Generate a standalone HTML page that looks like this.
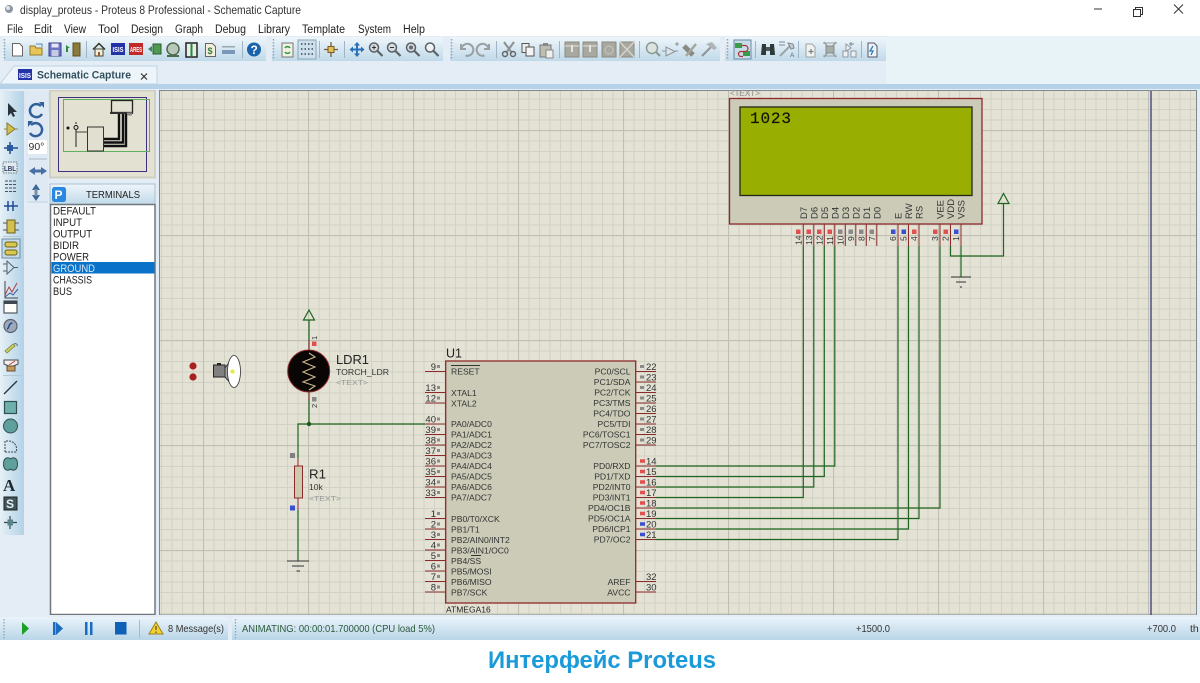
<!DOCTYPE html>
<html><head><meta charset="utf-8"><title>display_proteus</title>
<style>
html,body{margin:0;padding:0;background:#fff;width:1200px;height:683px;overflow:hidden}
svg{display:block;font-family:"Liberation Sans",sans-serif;filter:blur(.3px)}
.m{font-size:11.5px;fill:#222}
.pl{font-size:8.6px;fill:#333}
.pn{font-size:9.5px;fill:#333}
.v{font-size:8px;fill:#333}
.t{font-size:11px;fill:#222}
</style></head><body>
<svg width="1200" height="683" viewBox="0 0 1200 683" xmlns="http://www.w3.org/2000/svg">
<defs>
<linearGradient id="tb" x1="0" y1="0" x2="0" y2="1"><stop offset="0" stop-color="#eef5fa"/><stop offset="1" stop-color="#c0d9e9"/></linearGradient>
<linearGradient id="st" x1="0" y1="0" x2="0" y2="1"><stop offset="0" stop-color="#eaf3fa"/><stop offset="1" stop-color="#b9d5e7"/></linearGradient>
<linearGradient id="lt" x1="0" y1="0" x2="1" y2="0"><stop offset="0" stop-color="#e6f0f7"/><stop offset="1" stop-color="#b2d2e6"/></linearGradient>
<pattern id="minor" x="203" y="340" width="10.5" height="10.5" patternUnits="userSpaceOnUse"><rect width="10.5" height="10.5" fill="#e3e2d4"/><path d="M.5 0V10.5M0 .5H10.5" stroke="#d1d1c5" stroke-width="1" fill="none"/></pattern>
<pattern id="major" x="203" y="340" width="105" height="105" patternUnits="userSpaceOnUse"><path d="M.5 0V105M0 .5H105" stroke="#bfbfb3" stroke-width="1.200" fill="none"/></pattern>
</defs>

<!-- base -->
<rect width="1200" height="683" fill="#fff"/>
<rect y="36" width="1200" height="54" fill="#e4edf5"/>
<rect x="886" y="36" width="314" height="48" fill="#e7f3f6"/>
<rect y="84" width="1200" height="5" fill="#b5d2e8"/>
<rect y="89" width="1200" height="528" fill="#e4ecf6"/>
<rect x="1197" y="89" width="3" height="528" fill="#e2eef6"/>

<!-- title -->
<circle cx="9" cy="9" r="4" fill="#8d98a4"/><circle cx="8" cy="8" r="2" fill="#dfe5ea"/>
<text x="20" y="14" font-size="12" fill="#333" textLength="281" lengthAdjust="spacingAndGlyphs">display_proteus - Proteus 8 Professional - Schematic Capture</text>
<path d="M1094 9H1102" stroke="#333" stroke-width="1"/>
<path d="M1133.500 9.500h7v7h-7zM1135.500 9.500v-2h7v7h-2" fill="none" stroke="#333" stroke-width="1"/>
<path d="M1174 4.500L1183 13.500M1183 4.500L1174 13.500" stroke="#333" stroke-width="1"/>

<!-- menu -->
<text class="m" x="7" y="33" textLength="16" lengthAdjust="spacingAndGlyphs">File</text>
<text class="m" x="34" y="33" textLength="18" lengthAdjust="spacingAndGlyphs">Edit</text>
<text class="m" x="64" y="33" textLength="22" lengthAdjust="spacingAndGlyphs">View</text>
<text class="m" x="98" y="33" textLength="21" lengthAdjust="spacingAndGlyphs">Tool</text>
<text class="m" x="131" y="33" textLength="32" lengthAdjust="spacingAndGlyphs">Design</text>
<text class="m" x="175" y="33" textLength="28" lengthAdjust="spacingAndGlyphs">Graph</text>
<text class="m" x="215" y="33" textLength="31" lengthAdjust="spacingAndGlyphs">Debug</text>
<text class="m" x="258" y="33" textLength="32" lengthAdjust="spacingAndGlyphs">Library</text>
<text class="m" x="302" y="33" textLength="43" lengthAdjust="spacingAndGlyphs">Template</text>
<text class="m" x="358" y="33" textLength="33" lengthAdjust="spacingAndGlyphs">System</text>
<text class="m" x="403" y="33" textLength="22" lengthAdjust="spacingAndGlyphs">Help</text>

<!-- toolbars -->
<rect x="4" y="37" width="262" height="24" fill="url(#tb)"/>
<rect x="272" y="37" width="171" height="24" fill="url(#tb)"/>
<rect x="450" y="37" width="270" height="24" fill="url(#tb)"/>
<rect x="725" y="37" width="161" height="24" fill="url(#tb)"/>
<path d="M4.500 39V60M273.500 39V60M451.500 39V60M727.500 39V60" stroke="#8ea6b8" stroke-width="1.500" stroke-dasharray="1.500 1.500"/>
<path d="M86.500 41V58M242.500 41V58M319.500 41V58M344.500 41V58M496.500 41V58M559.500 41V58M639.500 41V58M755.500 41V58M798.500 41V58M861.500 41V58" stroke="#9fb4c4" stroke-width="1"/>

<!-- file icons -->
<path d="M12.500 43.500h7l3 3v9.500h-10z" fill="#fff" stroke="#666"/>
<path d="M30 55V46h5l1 2h6v7z" fill="#e8c558" stroke="#927a2c"/><path d="M36 44h6v3" fill="none" stroke="#5a88b0"/>
<rect x="49" y="43" width="12" height="13" fill="#6e74c4" stroke="#3c4290"/><rect x="51.500" y="43.500" width="7" height="4" fill="#e8e8f4"/><rect x="51.500" y="50" width="7" height="6" fill="#c8cae4"/>
<rect x="73" y="43" width="7" height="13" fill="#8a7a3c" stroke="#5c5020"/><path d="M66 45l4 3h-2v4h-2z" fill="#2c8c3c"/>
<!-- home -->
<path d="M93 49.500L99 43.500L105 49.500" fill="none" stroke="#332" stroke-width="1.500"/><rect x="95" y="49" width="8" height="7" fill="#f2eedf" stroke="#443"/><rect x="98" y="52" width="2" height="4" fill="#a05a20"/>
<!-- isis/ares -->
<rect x="111" y="43" width="14" height="12" fill="#2432a8"/><text x="112.500" y="52" font-size="7.500" font-weight="bold" fill="#fff" textLength="11" lengthAdjust="spacingAndGlyphs">ISIS</text>
<rect x="129" y="43" width="14" height="12" fill="#c22a2a"/><text x="130" y="52" font-size="7" font-weight="bold" fill="#fff" textLength="12" lengthAdjust="spacingAndGlyphs">ARES</text>
<path d="M148 49l4-3v6z" fill="#3a8a5a"/><rect x="153" y="44" width="8" height="10" fill="#4e9a50" stroke="#2c5c30"/>
<circle cx="173" cy="49" r="6" fill="#b8c8b8" stroke="#4f6a50" stroke-width="1.500"/><path d="M167 56h12" stroke="#4f6a50" stroke-width="2"/>
<rect x="186" y="43" width="11" height="14" fill="#e8efe0" stroke="#222" stroke-width="1.500"/><path d="M191.500 44v12" stroke="#1a8a4a" stroke-width="2"/>
<path d="M205.500 43.500h7l3 3v10h-10z" fill="#f2f0dc" stroke="#666"/><text x="207.500" y="54" font-size="9" font-weight="bold" fill="#3a7a3a">$</text>
<rect x="222" y="46" width="13" height="1.500" fill="#9aa"/><rect x="222" y="50" width="13" height="4" fill="#7a96b8"/>
<circle cx="254" cy="49.500" r="7" fill="#1b62ac"/><text x="250.500" y="54" font-size="12" font-weight="bold" fill="#fff">?</text>
<!-- design tools -->
<rect x="282" y="43" width="11" height="14" fill="#f2f2e4" stroke="#777"/><path d="M285 48a3 3 0 0 1 5 0M290 52a3 3 0 0 1-5 0" fill="none" stroke="#2c9a3c" stroke-width="1.500"/>
<rect x="298" y="40" width="18" height="19" fill="#cfe0ec" stroke="#8aa6b8"/><path d="M301 44h12M301 49h12M301 54h12" stroke="#2f4a5c" stroke-width="1.500" stroke-dasharray="1.500 2"/>
<path d="M331 42V57M324 49.500H338" stroke="#7a5a2c" stroke-width="1.300"/><rect x="328" y="46.500" width="6" height="6" fill="#e0c050" stroke="#7a5a2c"/>
<path d="M357 42l3 3.500h-2v3h3v-2l3.500 3-3.500 3v-2h-3v3h2l-3 3.500-3-3.500h2v-3h-3v2l-3.500-3 3.500-3v2h3v-3h-2z" fill="#2a72b8"/>
<g fill="#d4dce0" stroke="#5a6268" stroke-width="1.500"><circle cx="374" cy="47.500" r="4.500"/><circle cx="392" cy="47.500" r="4.500"/><circle cx="411" cy="47.500" r="4.500"/><circle cx="430" cy="47.500" r="4.500" fill="#eef2f4"/></g>
<path d="M377.500 51l5 5M395.500 51l5 5M414.500 51l5 5M433.500 51l5 5" stroke="#5a6268" stroke-width="2.200"/>
<path d="M372 47.500h4M374 45.500v4M390 47.500h4" stroke="#333" stroke-width="1"/><circle cx="411" cy="47.500" r="2" fill="#667"/>
<!-- undo redo -->
<path d="M461 44v5h5M461.500 48.500a6 6 0 1 1 4 7" fill="none" stroke="#99a0a4" stroke-width="2"/>
<path d="M489 44v5h-5M488.500 48.500a6 6 0 1 0-4 7" fill="none" stroke="#99a0a4" stroke-width="2"/>
<path d="M504 42l8 11M514 42l-8 11" stroke="#8a9094" stroke-width="2"/><circle cx="505" cy="54" r="2.500" fill="none" stroke="#666" stroke-width="1.500"/><circle cx="513" cy="54" r="2.500" fill="none" stroke="#666" stroke-width="1.500"/>
<rect x="522" y="43.500" width="7" height="9" fill="#eee" stroke="#555"/><rect x="526" y="47" width="8" height="9" fill="#f4f4f4" stroke="#555"/>
<rect x="540" y="45" width="11" height="12" fill="#bdbdb0" stroke="#777"/><rect x="543" y="43" width="5" height="3" fill="#888"/><rect x="546" y="50" width="7" height="8" fill="#eee" stroke="#888"/>
<g fill="#a8a8a0" stroke="#8a8a84"><rect x="565" y="42" width="14" height="15"/><rect x="583" y="42" width="14" height="15"/><rect x="602" y="42" width="14" height="15"/><rect x="620" y="42" width="14" height="15"/></g>
<path d="M565 46h14M583 46h14" stroke="#e4e4dc"/><path d="M572 45v7M590 45v7" stroke="#e4e4dc" stroke-width="2"/><path d="M620 42l14 15M634 42l-14 15" stroke="#d4d4cc" stroke-width="1.500"/><circle cx="609" cy="50" r="4" fill="none" stroke="#c8c8c0"/>
<!-- gray tools -->
<circle cx="652" cy="48" r="5.500" fill="#dce4e0" stroke="#8c9a94" stroke-width="1.500"/><path d="M656 52l4 4" stroke="#8c9a94" stroke-width="2.200"/>
<path d="M666 47v9l9-4.500z" fill="#dde4e8" stroke="#8a9498"/><path d="M662 51h4M675 51h3M675 44h4M677 42v4" stroke="#8a9498"/>
<path d="M684 46l9 9" stroke="#8a8a80" stroke-width="5"/><path d="M686 56l10-12" stroke="#a6a69c" stroke-width="2.500"/>
<path d="M702 56l11-11" stroke="#8e9498" stroke-width="2"/><path d="M706 44l6-2 5 6-3 2z" fill="#aeb4b8"/>
<!-- right group -->
<rect x="734" y="40" width="17" height="19" fill="#c8dcea" stroke="#6a8ca4"/><rect x="735" y="43" width="7" height="5" fill="#3a9a4a"/><rect x="743" y="51" width="7" height="5" fill="#3a9a4a"/><path d="M742 45.500h3a3 3 0 0 1 0 6h-4a2.500 2.500 0 0 0 0 5h2" fill="none" stroke="#a83232" stroke-width="1.200"/>
<path d="M762 44h4v11h-5zM770 44h4l1 11h-5z" fill="#2e3a3a"/><path d="M766 47h4v4h-4z" fill="#4a5a5a"/>
<path d="M779 42h6M779 45h6" stroke="#7a8a94"/><path d="M780 56l10-10" stroke="#9aa4aa" stroke-width="2"/><path d="M788 43l5 1 1 4-3 1z" fill="#c4ccd0" stroke="#7a8a94"/><text x="790" y="57" font-size="6.500" fill="#667">A</text>
<path d="M806 44h6l3 3v10h-9z" fill="#f0f2ee" stroke="#9aa4a8"/><path d="M811 49v5M808.500 51.500h5" stroke="#7a8488" stroke-width="1.300"/>
<path d="M824 42l12 15M836 42l-12 15" stroke="#9aa0a0" stroke-width="1.500"/><rect x="826" y="46" width="8" height="7" fill="#a6aca8" stroke="#858c88"/><path d="M823 43h14M823 56h14" stroke="#9aa0a0"/>
<path d="M846 44l5 4-5 3zM843 51h5v6h-5zM851 51h5v6h-5z" fill="#eef1f2" stroke="#9099a0"/><path d="M851 42v4M849 44h5" stroke="#7b858c"/>
<path d="M868 43h6l3 3v11h-9z" fill="#eef4f6" stroke="#556"/><path d="M873 46l-3 5h3l-2 4" fill="none" stroke="#2a7ac0" stroke-width="1.300"/>

<!-- tab -->
<path d="M0 84L14 66H157V84Z" fill="#edf5fa" stroke="#bdd3e3"/>
<rect x="18" y="69" width="14" height="11" fill="#2432a8"/><text x="19" y="78" font-size="7.500" font-weight="bold" fill="#fff" textLength="12" lengthAdjust="spacingAndGlyphs">ISIS</text>
<text x="37" y="78.500" font-size="11" font-weight="bold" fill="#33505f" textLength="94" lengthAdjust="spacingAndGlyphs">Schematic Capture</text>
<path d="M141 73.500l6 6M147 73.500l-6 6" stroke="#333" stroke-width="1.200"/>

<!-- left toolbar -->
<rect x="0" y="91" width="24" height="444" fill="url(#lt)"/>
<rect x="24" y="91" width="25" height="23" fill="#dbe8f2"/>
<rect x="26" y="91" width="22" height="112" fill="#dfe9f3"/>
<!-- rotate icons -->
<path d="M41 106a6.500 6.500 0 1 0 1 8" fill="none" stroke="#30609a" stroke-width="2.500"/><path d="M39 102h5v6z" fill="#30609a"/>
<path d="M31 125a6.500 6.500 0 1 1-1 8" fill="none" stroke="#30609a" stroke-width="2.500"/><path d="M33 121h-5v6z" fill="#30609a"/>
<rect x="28" y="140" width="19" height="14" fill="#fff"/><text x="28.500" y="150" font-size="10.500" fill="#333">90°</text>
<path d="M29 159H47" stroke="#a9b9c5"/>
<path d="M29 171l6-4v8zM47 171l-6-4v8z" fill="#4a6fa4"/><rect x="34" y="169.500" width="8" height="3" fill="#4a6fa4"/>
<path d="M36 184l-4 6h8zM36 201l-4-6h8z" fill="#35689e"/><rect x="34.500" y="189" width="3" height="7" fill="#7a8fa6"/>
<path d="M28 202H48" stroke="#c4d2dc"/>

<!-- left icons -->
<path d="M8 103v13l3-3 2 4 2-1-2-4h4z" fill="#28323c"/>
<path d="M4 129h3M14 129h4" stroke="#9a8a3a"/><path d="M7 123v12l8-6z" fill="#d0c050" stroke="#8a7a30"/>
<path d="M10 142v12M4 148h14" stroke="#2a4a8c" stroke-width="1.500"/><rect x="7" y="145" width="6" height="6" fill="#2a5aa0"/>
<rect x="3" y="162" width="14" height="11" fill="#dfeaf0" stroke="#6a7a88" stroke-dasharray="1.500 1"/><text x="4" y="171" font-size="7.500" fill="#2a3a5a" font-weight="bold" textLength="12" lengthAdjust="spacingAndGlyphs">LBL</text>
<path d="M5 181h11M5 184.500h11M5 188h11M5 191.500h11" stroke="#4a5060" stroke-dasharray="3 1"/>
<path d="M4 206H18M8 201V211M13 201V211" stroke="#224a94" stroke-width="1.500"/>
<rect x="7" y="220" width="8" height="13" fill="#d4c050" stroke="#6a6020"/><path d="M3 223h4M3 230h4M15 223h4M15 230h4" stroke="#555"/>
<path d="M3 236.500H22" stroke="#b9c9d4"/>
<rect x="2" y="239" width="18" height="19" fill="#c6dae8" stroke="#6e8ea6"/><rect x="5" y="242" width="12" height="5" rx="2" fill="#d8c850" stroke="#6a6020"/><rect x="5" y="250" width="12" height="5" rx="2" fill="#d8c850" stroke="#6a6020"/>
<path d="M7 261v13l7-6.500zM3 264h4M3 271h4M14 267.500h4" fill="none" stroke="#55606a"/>
<path d="M5 281v17h13" fill="none" stroke="#445"/><path d="M5 295l4-8 3 5 5-9" fill="none" stroke="#b04040"/><path d="M5 297l5-4 3 2 5-6" fill="none" stroke="#3a5a9a"/>
<rect x="4" y="301" width="13" height="12" fill="#fdfdfa" stroke="#505a62" stroke-width="1.200"/><rect x="4" y="301" width="13" height="3" fill="#3e4650"/>
<circle cx="10.500" cy="326" r="6.500" fill="#a0a8b8" stroke="#5a6272" stroke-width="1.200"/><path d="M7 329c1 0 1.500-1.500 2-3s1.500-3 3.500-3" fill="none" stroke="#1a4a9a" stroke-width="1.500"/>
<path d="M5 351l8-7 2 2-8 7z" fill="#c8d060" stroke="#7a7a30" stroke-width=".7"/><path d="M14 344c2-1 3 0 3.500 2" fill="none" stroke="#666"/>
<path d="M4 360h14v4l-7 3-7-3z" fill="#f0f0ee" stroke="#4a4a50"/><rect x="7" y="366" width="8" height="5" fill="#c09a60" stroke="#6a5030"/><path d="M9 365l6-4" stroke="#c04040"/>
<path d="M3 375.500H22" stroke="#b9c9d4"/>
<path d="M4 394L17 381" stroke="#2c343a" stroke-width="1.300"/>
<rect x="4.500" y="401.500" width="12" height="12" fill="#6fb0ac" stroke="#2f4f52" stroke-width="1.200"/>
<circle cx="10.500" cy="426" r="7" fill="#5f9f9c" stroke="#2f4f52"/>
<path d="M5 452v-11h4a8 8 0 0 1 7 11z" fill="none" stroke="#3a4450" stroke-dasharray="2 1"/>
<path d="M10.500 459c-2-2-7-2-7 5s5 7 7 5c2 2 7 2 7-5s-5-7-7-5z" fill="#5f9f9c" stroke="#2f4f52"/>
<text x="3" y="491" font-size="17" font-weight="bold" font-family="Liberation Serif,serif" fill="#1e2a30">A</text>
<rect x="4" y="497" width="13" height="13" fill="#40565c" stroke="#222"/><text x="6" y="508" font-size="12" font-weight="bold" fill="#e8f0f0">S</text>
<path d="M10 516v13M4 522.500h13" stroke="#2a4a4e" stroke-width="1.200"/><rect x="7.500" y="519.500" width="5.500" height="6" fill="#5b8286"/>

<!-- preview -->
<rect x="49" y="90" width="107" height="88.500" fill="#cfcfc2"/>
<rect x="51" y="91.500" width="103" height="85" fill="#e2e1d2"/>
<rect x="58.500" y="97.500" width="88" height="74" fill="none" stroke="#3a3280" stroke-width="1"/>
<rect x="63.500" y="99.500" width="86" height="52" fill="none" stroke="#60b060" stroke-width="1"/>
<rect x="87.500" y="127" width="16" height="24" fill="#e0dfd0" stroke="#333"/>
<rect x="111.500" y="100.500" width="21" height="12" fill="#e2e1d2" stroke="#222" stroke-width="1.300"/><rect x="110" y="112" width="23" height="2" fill="#333"/>
<path d="M104 139H119V114M104 142.500H123V114M104 146H126V114" fill="none" stroke="#111" stroke-width="2.400"/><path d="M127 114h5" stroke="#888" stroke-width="3"/>
<circle cx="76" cy="127.500" r="2" fill="none" stroke="#111"/><path d="M76 122v2M76 130V147" stroke="#222"/><circle cx="68" cy="128" r="1.500" fill="#111"/><path d="M76 132H88" stroke="#444"/>

<!-- terminals -->
<rect x="50" y="184" width="105" height="21" fill="url(#tb)" stroke="#a9bfce"/>
<rect x="52" y="187" width="14" height="15" rx="2.500" fill="#2a88e0"/><text x="54.500" y="199" font-size="12" font-weight="bold" fill="#fff">P</text>
<text x="86" y="198" font-size="10.500" fill="#222" textLength="54" lengthAdjust="spacingAndGlyphs">TERMINALS</text>
<rect x="50.500" y="204.500" width="104.500" height="410" fill="#fff" stroke="#70777c" stroke-width="1.500"/>
<rect x="51.500" y="262" width="103" height="11.500" fill="#0a72c8"/>
<text class="t" x="53" y="214.500" textLength="43" lengthAdjust="spacingAndGlyphs">DEFAULT</text>
<text class="t" x="53" y="226" textLength="29" lengthAdjust="spacingAndGlyphs">INPUT</text>
<text class="t" x="53" y="237.500" textLength="39" lengthAdjust="spacingAndGlyphs">OUTPUT</text>
<text class="t" x="53" y="249" textLength="26" lengthAdjust="spacingAndGlyphs">BIDIR</text>
<text class="t" x="53" y="260.500" textLength="36" lengthAdjust="spacingAndGlyphs">POWER</text>
<text class="t" x="53" y="272" style="fill:#d6e8f6" textLength="42" lengthAdjust="spacingAndGlyphs">GROUND</text>
<text class="t" x="53" y="283.500" textLength="39" lengthAdjust="spacingAndGlyphs">CHASSIS</text>
<text class="t" x="53" y="295" textLength="19" lengthAdjust="spacingAndGlyphs">BUS</text>

<!-- canvas -->
<rect x="160" y="91" width="1037" height="524" fill="url(#minor)"/>
<rect x="160" y="91" width="1037" height="524" fill="url(#major)"/>
<rect x="159.500" y="90.500" width="1037" height="524.500" fill="none" stroke="#7f8a8e" stroke-width="1"/>
<path d="M1151 91V615" stroke="#2e2a70" stroke-width="1.200"/>

<!-- LCD -->
<text x="730" y="96" font-size="8" fill="#888">&lt;TEXT&gt;</text>
<rect x="729.500" y="98.500" width="252.500" height="125.500" fill="#cbcbb8" stroke="#8e2a2a" stroke-width="1.300"/>
<rect x="740" y="107" width="232" height="88.500" fill="#98ae00" stroke="#23281a" stroke-width="1.300"/>
<text x="750" y="123" font-family="Liberation Mono,monospace" font-size="16" fill="#101400" textLength="41" stroke="#101400" stroke-width=".2">1023</text>
<g font-size="9.500" fill="#333">
<text transform="translate(807 219) rotate(-90)">D7</text>
<text transform="translate(817.500 219) rotate(-90)">D6</text>
<text transform="translate(828 219) rotate(-90)">D5</text>
<text transform="translate(838.500 219) rotate(-90)">D4</text>
<text transform="translate(849 219) rotate(-90)">D3</text>
<text transform="translate(859.500 219) rotate(-90)">D2</text>
<text transform="translate(870 219) rotate(-90)">D1</text>
<text transform="translate(880.500 219) rotate(-90)">D0</text>
<text transform="translate(901.500 219) rotate(-90)">E</text>
<text transform="translate(912 219) rotate(-90)">RW</text>
<text transform="translate(922.500 219) rotate(-90)">RS</text>
<text transform="translate(943.500 219) rotate(-90)">VEE</text>
<text transform="translate(954 219) rotate(-90)">VDD</text>
<text transform="translate(964.500 219) rotate(-90)">VSS</text>
</g>
<!-- lcd pins -->
<path d="M803.300 224V246M813.800 224V246M824.300 224V246M834.800 224V246M845.300 224V246M855.800 224V246M866.300 224V246M876.800 224V246M898 224V246M908.500 224V246M919 224V246M940 224V246M950.500 224V246M961 224V246" stroke="#8e2a2a" stroke-width="1"/>
<g fill="#e05050"><rect x="796" y="229.500" width="4.500" height="4.500"/><rect x="806.500" y="229.500" width="4.500" height="4.500"/><rect x="817" y="229.500" width="4.500" height="4.500"/><rect x="827.500" y="229.500" width="4.500" height="4.500"/><rect x="933" y="229.500" width="4.500" height="4.500"/><rect x="943.500" y="229.500" width="4.500" height="4.500"/><rect x="912" y="229.500" width="4.500" height="4.500"/></g>
<g fill="#8a8a8a"><rect x="838" y="229.500" width="4.500" height="4.500"/><rect x="848.500" y="229.500" width="4.500" height="4.500"/><rect x="859" y="229.500" width="4.500" height="4.500"/><rect x="869.500" y="229.500" width="4.500" height="4.500"/></g>
<g fill="#3a50d0"><rect x="891" y="229.500" width="4.500" height="4.500"/><rect x="901.500" y="229.500" width="4.500" height="4.500"/><rect x="954" y="229.500" width="4.500" height="4.500"/></g>
<g font-size="8.500" fill="#333">
<text transform="translate(801.500 245) rotate(-90)">14</text>
<text transform="translate(812 245) rotate(-90)">13</text>
<text transform="translate(822.500 245) rotate(-90)">12</text>
<text transform="translate(833 245) rotate(-90)">11</text>
<text transform="translate(843.500 245) rotate(-90)">10</text>
<text transform="translate(854 241) rotate(-90)">9</text>
<text transform="translate(864.500 241) rotate(-90)">8</text>
<text transform="translate(875 241) rotate(-90)">7</text>
<text transform="translate(896 241) rotate(-90)">6</text>
<text transform="translate(906.500 241) rotate(-90)">5</text>
<text transform="translate(917 241) rotate(-90)">4</text>
<text transform="translate(938 241) rotate(-90)">3</text>
<text transform="translate(948.500 241) rotate(-90)">2</text>
<text transform="translate(959 241) rotate(-90)">1</text>
</g>

<!-- wires -->
<g fill="none" stroke="#1f651f" stroke-width="1.200">
<path d="M656 466H834.800V246"/>
<path d="M656 476.500H824.300V246"/>
<path d="M656 487H813.800V246"/>
<path d="M656 497.500H803.300V246"/>
<path d="M656 508H940V246"/>
<path d="M656 518.500H919V246"/>
<path d="M656 529H908.500V246"/>
<path d="M656 539.500H898V246"/>
<path d="M950.500 246V256H1003.500V204"/>
<path d="M961 246V277"/>
<path d="M998 203.500L1003.500 193.500L1009 203.500Z"/>
<path d="M309 350V320M303.500 320L309 310L314.500 320Z"/>
<path d="M309 392V424M298 458V424H425"/>
<path d="M298 510V561"/>
</g>
<path d="M951 277H971M956 282H966M960 287H962" stroke="#333" stroke-width="1"/>
<path d="M287 561H309M292 566H304M296.500 571H300" stroke="#333" stroke-width="1"/>
<circle cx="309" cy="424" r="2.200" fill="#1a5a1a"/>

<!-- source -->
<circle cx="193" cy="366" r="3.600" fill="#a82020"/><circle cx="193" cy="377" r="3.600" fill="#a82020"/>
<rect x="213.500" y="365" width="11.500" height="12" fill="#808080" stroke="#222"/><rect x="217" y="363" width="4" height="2" fill="#222"/>
<path d="M225 368L233 357V386L225 377Z" fill="#a8a8a8" stroke="#333"/>
<ellipse cx="234" cy="371.500" rx="6.500" ry="16" fill="#fff" stroke="#333" stroke-width=".8"/>
<circle cx="232.500" cy="371.500" r="2.200" fill="#e8e850"/>

<!-- LDR -->
<path d="M309 340V350M309 392V400" stroke="#8e2a2a"/>
<circle cx="308.700" cy="371" r="21" fill="#0a0606" stroke="#8e2a2a" stroke-width="1"/>
<path d="M309 353L315 357L303 362L315 367L303 372L315 377L303 382L315 386L309 390" fill="none" stroke="#c9b98a" stroke-width="1.100"/>
<rect x="312" y="341.500" width="4.500" height="4.500" fill="#e05050"/><rect x="312" y="397" width="4.500" height="4.500" fill="#8a8a8a"/>
<text transform="translate(317 340) rotate(-90)" font-size="7.500" fill="#333">1</text>
<text transform="translate(317 408) rotate(-90)" font-size="7.500" fill="#333">2</text>
<text x="336" y="364" font-size="13" fill="#222" textLength="33" lengthAdjust="spacingAndGlyphs">LDR1</text>
<text x="336" y="375" font-size="8.500" fill="#333" textLength="53" lengthAdjust="spacingAndGlyphs">TORCH_LDR</text>
<text x="336" y="385" font-size="7.500" fill="#999" textLength="32" lengthAdjust="spacingAndGlyphs">&lt;TEXT&gt;</text>

<!-- R1 -->
<path d="M298 458V466M298 498V510" stroke="#8e2a2a"/>
<rect x="294.500" y="466" width="8" height="32" fill="#cbcbb0" stroke="#8e2a2a"/>
<rect x="290" y="453" width="5" height="5" fill="#808080"/><rect x="290" y="505.500" width="5" height="5" fill="#3a50d0"/>
<text x="309" y="478.500" font-size="13" fill="#222" textLength="17" lengthAdjust="spacingAndGlyphs">R1</text>
<text x="309" y="490" font-size="8.500" fill="#333">10k</text>
<text x="309" y="501" font-size="7.500" fill="#999" textLength="32" lengthAdjust="spacingAndGlyphs">&lt;TEXT&gt;</text>

<!-- MCU -->
<text x="446" y="357.500" font-size="12.500" fill="#222">U1</text>
<rect x="445.700" y="361" width="190" height="242" fill="#cbcbb8" stroke="#8e2a2a" stroke-width="1.300"/>
<g stroke="#8e2a2a" stroke-width="1">
<path d="M425 371.500H445.500M425 392.500H445.500M425 403H445.500M425 424H445.500M425 434.500H445.500M425 445H445.500M425 455.500H445.500M425 466H445.500M425 476.500H445.500M425 487H445.500M425 497.500H445.500M425 518.500H445.500M425 529H445.500M425 539.500H445.500M425 550H445.500M425 560.500H445.500M425 571H445.500M425 581.500H445.500M425 592H445.500"/>
<path d="M636 371.500H656M636 382H656M636 392.500H656M636 403H656M636 413.500H656M636 424H656M636 434.500H656M636 445H656M636 466H656M636 476.500H656M636 487H656M636 497.500H656M636 508H656M636 518.500H656M636 529H656M636 539.500H656M636 581.500H656M636 592H656"/>
</g>
<!-- pin numbers left -->
<g text-anchor="end">
<text class="pn" x="436" y="370">9</text><text class="pn" x="436" y="391">13</text><text class="pn" x="436" y="401.500">12</text><text class="pn" x="436" y="422.500">40</text><text class="pn" x="436" y="433">39</text><text class="pn" x="436" y="443.500">38</text><text class="pn" x="436" y="454">37</text><text class="pn" x="436" y="464.500">36</text><text class="pn" x="436" y="475">35</text><text class="pn" x="436" y="485.500">34</text><text class="pn" x="436" y="496">33</text><text class="pn" x="436" y="517">1</text><text class="pn" x="436" y="527.500">2</text><text class="pn" x="436" y="538">3</text><text class="pn" x="436" y="548.500">4</text><text class="pn" x="436" y="559">5</text><text class="pn" x="436" y="569.500">6</text><text class="pn" x="436" y="580">7</text><text class="pn" x="436" y="590.500">8</text>
</g>
<path d="M437 366.500h3M437 387.500h3M437 398h3M437 419h3M437 429.500h3M437 440h3M437 450.500h3M437 461h3M437 471.500h3M437 482h3M437 492.500h3M437 513.500h3M437 524h3M437 534.500h3M437 545h3M437 555.500h3M437 566h3M437 576.500h3M437 587h3" stroke="#8a8a8a" stroke-width="3"/>
<!-- pin numbers right -->
<text class="pn" x="646" y="370">22</text><text class="pn" x="646" y="380.500">23</text><text class="pn" x="646" y="391">24</text><text class="pn" x="646" y="401.500">25</text><text class="pn" x="646" y="412">26</text><text class="pn" x="646" y="422.500">27</text><text class="pn" x="646" y="433">28</text><text class="pn" x="646" y="443.500">29</text><text class="pn" x="646" y="464.500">14</text><text class="pn" x="646" y="475">15</text><text class="pn" x="646" y="485.500">16</text><text class="pn" x="646" y="496">17</text><text class="pn" x="646" y="506.500">18</text><text class="pn" x="646" y="517">19</text><text class="pn" x="646" y="527.500">20</text><text class="pn" x="646" y="538">21</text><text class="pn" x="646" y="580">32</text><text class="pn" x="646" y="590.500">30</text>
<path d="M640 366.500h4M640 377h4M640 387.500h4M640 398h4M640 408.500h4M640 419h4M640 429.500h4M640 440h4" stroke="#8a8a8a" stroke-width="3"/>
<path d="M640 461h5M640 471.500h5M640 482h5M640 492.500h5M640 503h5M640 513.500h5" stroke="#e05050" stroke-width="3.500"/>
<path d="M640 524h5M640 534.500h5" stroke="#3a50d0" stroke-width="3.500"/>
<!-- pin labels left -->
<text class="pl" x="451" y="374.500">RESET</text><path d="M451 365.500H480" stroke="#333"/>
<text class="pl" x="451" y="396">XTAL1</text><text class="pl" x="451" y="406.500">XTAL2</text>
<text class="pl" x="451" y="427">PA0/ADC0</text><text class="pl" x="451" y="437.500">PA1/ADC1</text><text class="pl" x="451" y="448">PA2/ADC2</text><text class="pl" x="451" y="458.500">PA3/ADC3</text><text class="pl" x="451" y="469">PA4/ADC4</text><text class="pl" x="451" y="479.500">PA5/ADC5</text><text class="pl" x="451" y="490">PA6/ADC6</text><text class="pl" x="451" y="500.500">PA7/ADC7</text>
<text class="pl" x="451" y="522">PB0/T0/XCK</text><text class="pl" x="451" y="532.500">PB1/T1</text><text class="pl" x="451" y="543">PB2/AIN0/INT2</text><text class="pl" x="451" y="553.500">PB3/AIN1/OC0</text><text class="pl" x="451" y="564">PB4/SS</text><path d="M471 555.500H481" stroke="#333"/><text class="pl" x="451" y="574.500">PB5/MOSI</text><text class="pl" x="451" y="585">PB6/MISO</text><text class="pl" x="451" y="595.500">PB7/SCK</text>
<!-- pin labels right -->
<g text-anchor="end">
<text class="pl" x="630.500" y="374.500">PC0/SCL</text><text class="pl" x="630.500" y="385">PC1/SDA</text><text class="pl" x="630.500" y="395.500">PC2/TCK</text><text class="pl" x="630.500" y="406">PC3/TMS</text><text class="pl" x="630.500" y="416.500">PC4/TDO</text><text class="pl" x="630.500" y="427">PC5/TDI</text><text class="pl" x="630.500" y="437.500">PC6/TOSC1</text><text class="pl" x="630.500" y="448">PC7/TOSC2</text>
<text class="pl" x="630.500" y="469">PD0/RXD</text><text class="pl" x="630.500" y="479.500">PD1/TXD</text><text class="pl" x="630.500" y="490">PD2/INT0</text><text class="pl" x="630.500" y="500.500">PD3/INT1</text><text class="pl" x="630.500" y="511">PD4/OC1B</text><text class="pl" x="630.500" y="521.500">PD5/OC1A</text><text class="pl" x="630.500" y="532">PD6/ICP1</text><text class="pl" x="630.500" y="542.500">PD7/OC2</text>
<text class="pl" x="630.500" y="585">AREF</text><text class="pl" x="630.500" y="595.500">AVCC</text>
</g>
<text x="446" y="612.500" font-size="8.500" fill="#222">ATMEGA16</text>

<!-- status bar -->
<rect y="615" width="1200" height="2" fill="#e4ecf6"/>
<rect x="0" y="617" width="228" height="23" fill="url(#st)"/>
<rect x="232" y="617" width="968" height="23" fill="url(#st)"/>
<path d="M4 619V639M235.500 619V639" stroke="#8ea6b8" stroke-width="1.300" stroke-dasharray="1.500 1.500"/>
<rect x="228" y="617" width="4" height="23" fill="#e4ecf6"/>
<path d="M22 622V635L29 628.500Z" fill="#18a020"/>
<rect x="53" y="622" width="2.500" height="13" fill="#1a6cc0"/><path d="M56 622V635L63 628.500Z" fill="#1a6cc0"/>
<rect x="85" y="622" width="2.500" height="13" fill="#1a6cc0"/><rect x="90" y="622" width="2.500" height="13" fill="#1a6cc0"/>
<rect x="115" y="622" width="11.500" height="12.500" fill="#1060b8"/>
<path d="M139.500 620V638" stroke="#a6bac8"/>
<path d="M156 622L163 634H149Z" fill="#f4d030" stroke="#9a8420"/><path d="M156 626v4M156 631.500v1.500" stroke="#333"/>
<text x="168" y="632" font-size="10.500" fill="#333" textLength="56" lengthAdjust="spacingAndGlyphs">8 Message(s)</text>
<text x="242" y="632" font-size="10.500" fill="#2a5a3a" textLength="193" lengthAdjust="spacingAndGlyphs">ANIMATING: 00:00:01.700000 (CPU load 5%)</text>
<text x="856" y="632" font-size="10.500" fill="#333" textLength="34" lengthAdjust="spacingAndGlyphs">+1500.0</text>
<text x="1147" y="632" font-size="10.500" fill="#333" textLength="29" lengthAdjust="spacingAndGlyphs">+700.0</text>
<text x="1190" y="632" font-size="10.500" fill="#333">th</text>

<!-- caption -->
<text x="488" y="668" font-size="24" font-weight="bold" fill="#1a9ad8" textLength="228" lengthAdjust="spacingAndGlyphs">Интерфейс Proteus</text>
</svg>
</body></html>
